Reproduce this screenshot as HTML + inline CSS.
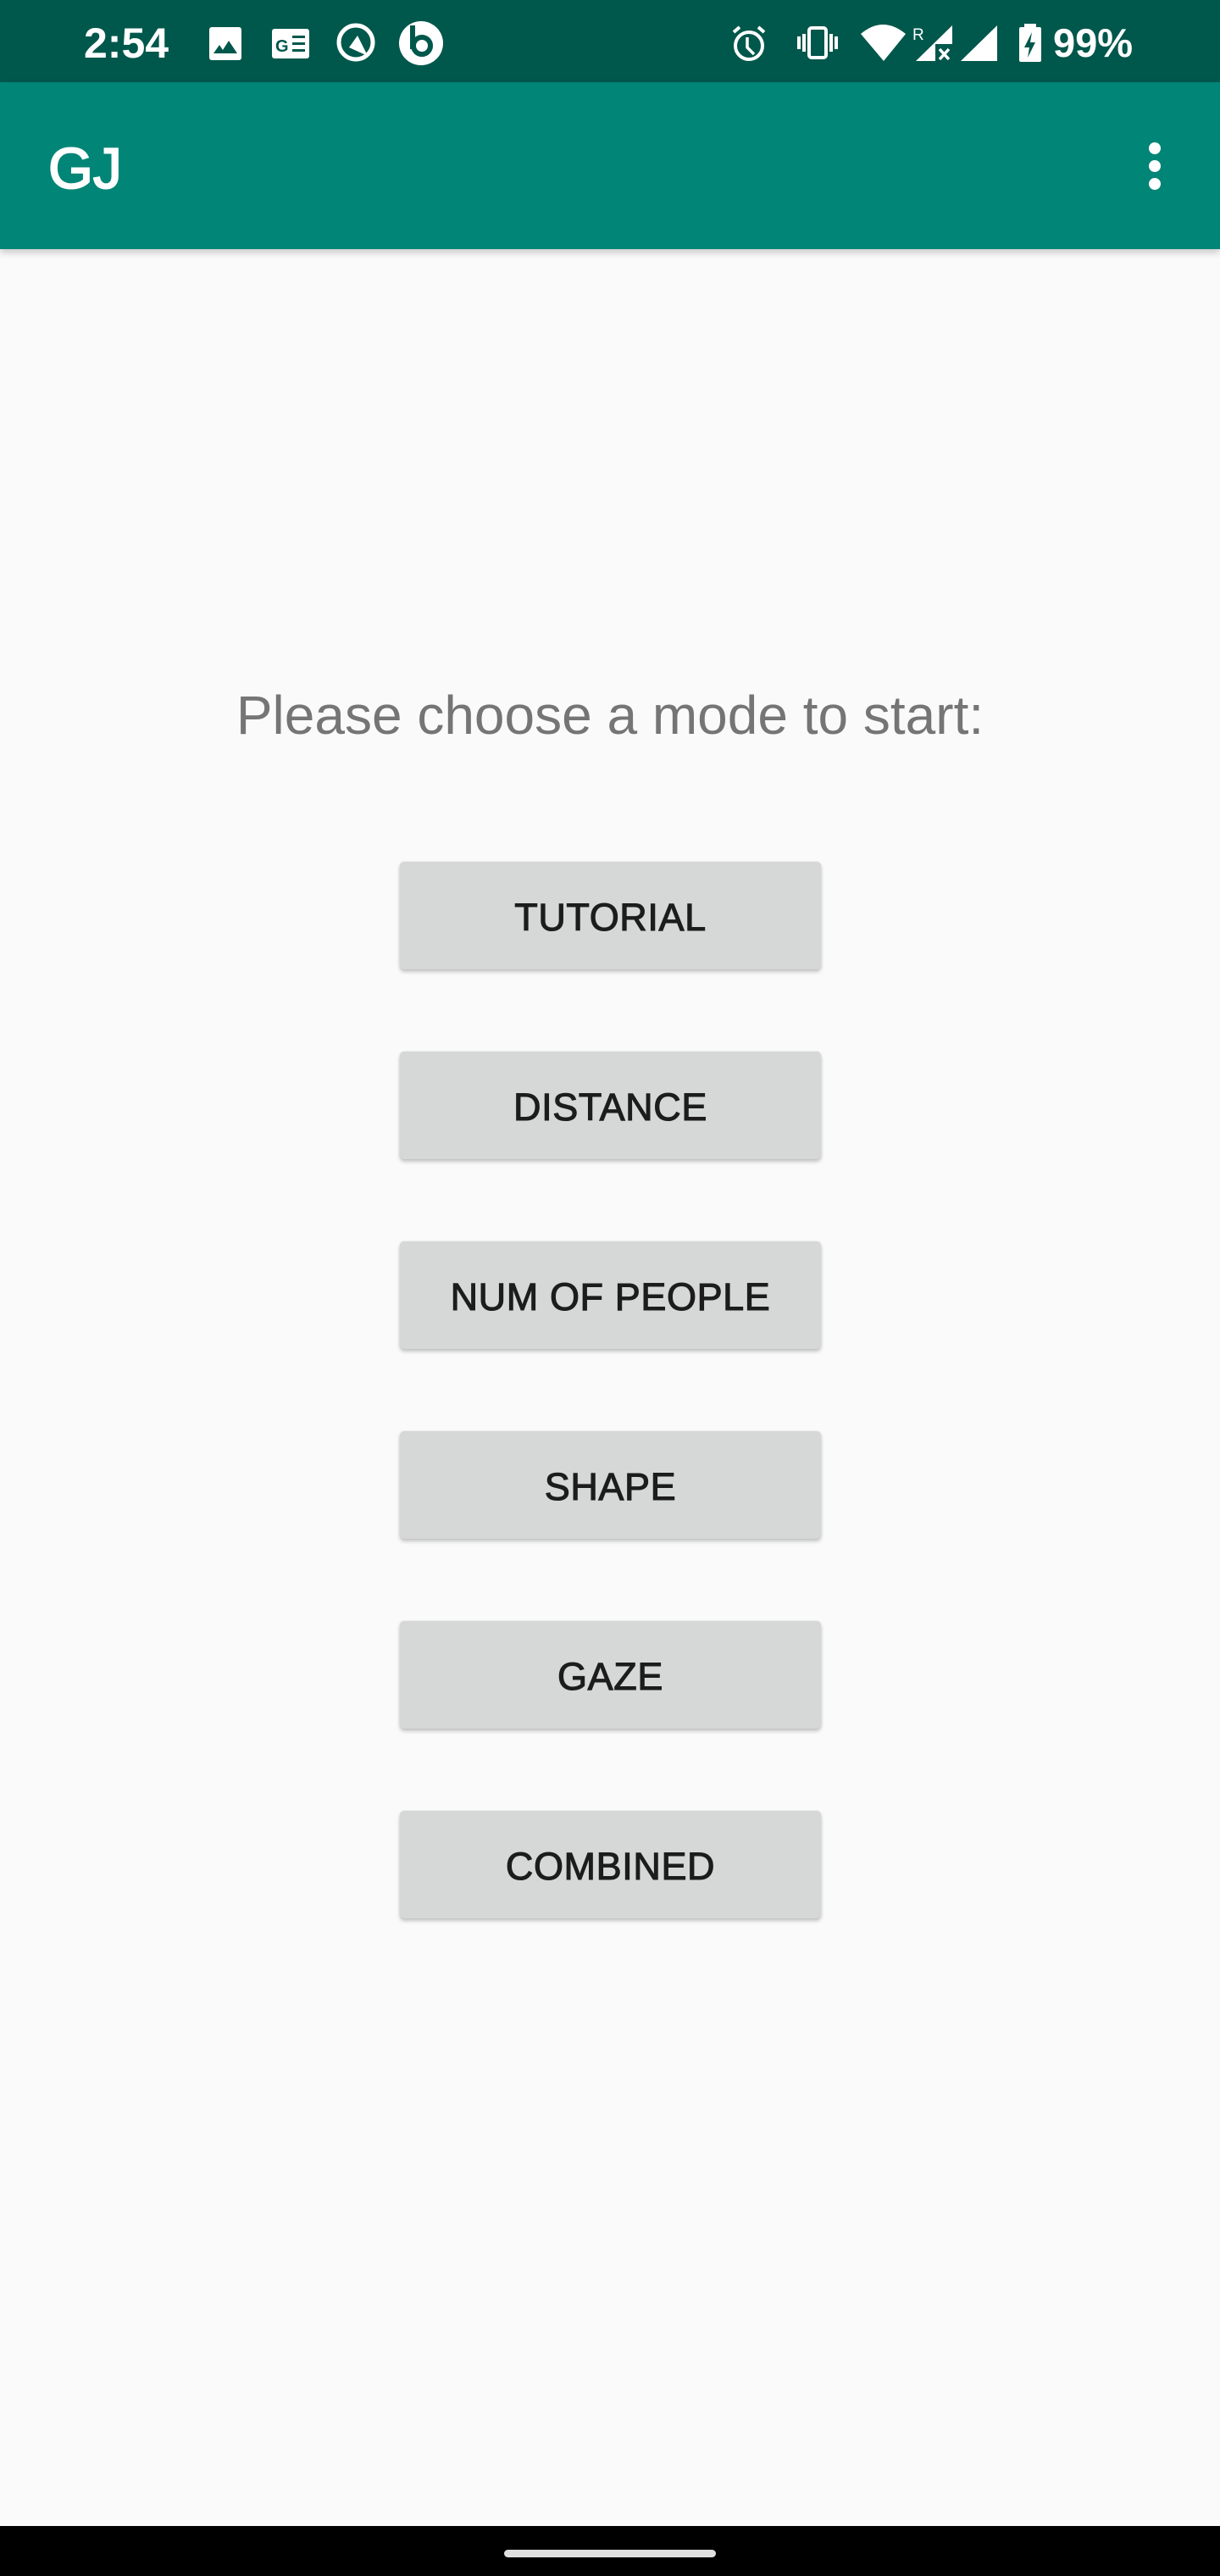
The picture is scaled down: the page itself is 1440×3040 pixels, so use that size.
<!DOCTYPE html>
<html><head><meta charset="utf-8">
<style>
html,body{margin:0;padding:0;}
body{width:1440px;height:3040px;position:relative;background:#fafafa;font-family:"Liberation Sans",Arial,sans-serif;overflow:hidden;}
.sb{position:absolute;left:0;top:0;width:1440px;height:97px;background:#00574b;}
.ab{position:absolute;left:0;top:97px;width:1440px;height:197px;background:#008577;box-shadow:0 4px 8px rgba(0,0,0,0.2);}
.t{position:absolute;color:#fff;}
.btn{position:absolute;left:472px;width:497px;height:127px;background:#d6d7d7;border-radius:5px;box-shadow:0 3px 5px rgba(0,0,0,0.22),0 0 2px rgba(0,0,0,0.1);text-align:center;line-height:131px;font-size:45px;color:#1c1c1c;-webkit-text-stroke:1.1px #1c1c1c;letter-spacing:0.6px;}
.nav{position:absolute;left:0;top:2981px;width:1440px;height:59px;background:#000;}
.pill{position:absolute;left:595px;top:3009px;width:250px;height:9px;border-radius:5px;background:#e0e0e0;}
</style></head><body>
<div class="sb">
  <div class="t" style="left:99px;top:23px;font-size:50px;font-weight:bold;line-height:56px;">2:54</div>
  <svg style="position:absolute;left:0;top:0" width="1440" height="97">
    <rect x="247" y="32" width="38" height="39" rx="3" fill="#fff"/>
    <path d="M252 63 L259 53 L263 59 L270 48 L280 63 Z" fill="#00574b"/>
    <rect x="321" y="34" width="44" height="35" rx="3" fill="#fff"/>
    <text x="325" y="61" font-family="Liberation Sans" font-weight="bold" font-size="20" fill="#00574b">G</text>
    <rect x="345" y="42" width="15" height="3" fill="#00574b"/>
    <rect x="345" y="50" width="15" height="3" fill="#00574b"/>
    <rect x="345" y="58" width="15" height="3" fill="#00574b"/>
    <circle cx="420" cy="50" r="20" fill="none" stroke="#fff" stroke-width="5"/>
    <path d="M412 56 L422 42 L434 66 Z" fill="#fff"/>
    <circle cx="497" cy="51" r="26" fill="#fff"/>
    <circle cx="498" cy="54" r="10" fill="none" stroke="#00574b" stroke-width="6"/>
    <rect x="484" y="30" width="6" height="28" fill="#00574b"/>
    <circle cx="884" cy="54" r="16" fill="none" stroke="#fff" stroke-width="4"/>
    <path d="M882 44 L882 56 L890 64" fill="none" stroke="#fff" stroke-width="3.5"/>
    <path d="M866 38 L873 32 M902 38 L895 32" stroke="#fff" stroke-width="4"/>
    <rect x="955" y="33" width="20" height="35" rx="3" fill="none" stroke="#fff" stroke-width="4"/>
    <rect x="941" y="43" width="4" height="15" fill="#fff"/><rect x="947" y="40" width="4" height="21" fill="#fff"/>
    <rect x="979" y="40" width="4" height="21" fill="#fff"/><rect x="985" y="43" width="4" height="15" fill="#fff"/>
    <path d="M1016 40 Q1042 18 1069 40 L1043 72 Z" fill="#fff"/>
    <text x="1077" y="47" font-family="Liberation Sans" font-size="19" fill="#fff">R</text>
    <path d="M1081 72 L1124 30 L1124 52 L1104 52 L1104 72 Z" fill="#fff"/>
    <path d="M1109 58 L1120 70 M1120 58 L1109 70" stroke="#fff" stroke-width="3.5"/>
    <path d="M1134 72 L1177 30 L1177 72 Z" fill="#fff"/>
    <rect x="1209" y="28" width="14" height="6" fill="#fff"/>
    <rect x="1203" y="32" width="26" height="41" rx="2" fill="#fff"/>
    <path d="M1218 38 L1209 56 L1215 56 L1213 68 L1222 50 L1216 50 Z" fill="#00574b"/>
  </svg>
  <div class="t" style="left:1243px;top:23px;font-size:47px;font-weight:bold;line-height:56px;">99%</div>
</div>
<div class="ab">
  <div class="t" style="left:57px;top:62px;font-size:68px;line-height:80px;-webkit-text-stroke:2px #fff;">GJ</div>
  <svg style="position:absolute;left:1350px;top:66px" width="30" height="64">
    <circle cx="13" cy="12" r="7" fill="#fff"/><circle cx="13" cy="33" r="7" fill="#fff"/><circle cx="13" cy="54" r="7" fill="#fff"/>
  </svg>
</div>
<div style="position:absolute;left:0;top:804px;width:1440px;text-align:center;font-size:64px;line-height:80px;color:#757575;">Please choose a mode to start:</div>
<div class="btn" style="top:1017px">TUTORIAL</div>
<div class="btn" style="top:1241px">DISTANCE</div>
<div class="btn" style="top:1465px">NUM OF PEOPLE</div>
<div class="btn" style="top:1689px">SHAPE</div>
<div class="btn" style="top:1913px">GAZE</div>
<div class="btn" style="top:2137px">COMBINED</div>
<div class="nav"></div>
<div class="pill"></div>
</body></html>
